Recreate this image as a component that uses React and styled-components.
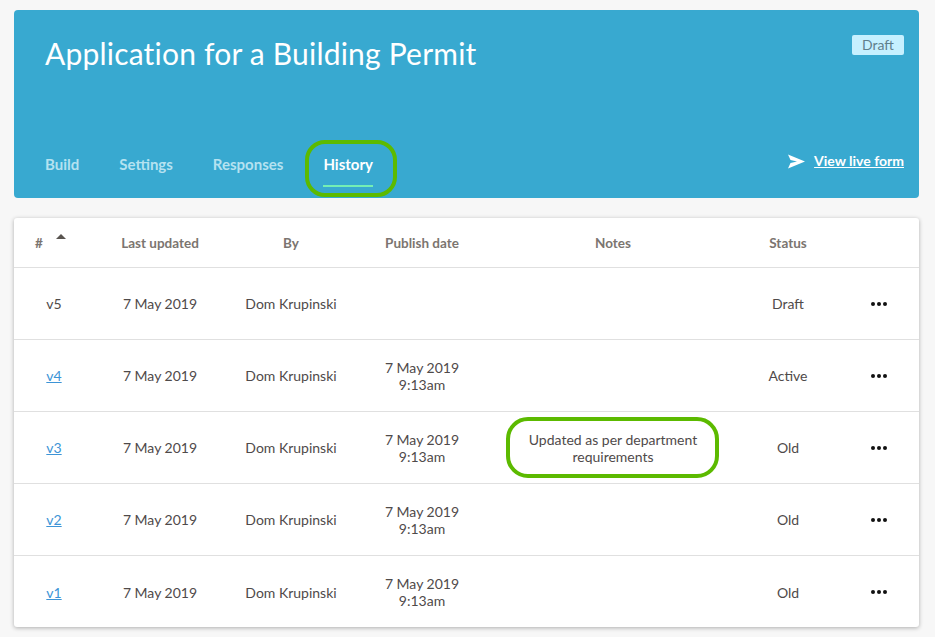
import styled, { createGlobalStyle } from "styled-components";

const rows = [
  { version: "v5", updated: "7 May 2019", by: "Dom Krupinski", status: "Draft" },
  { version: "v4", link: true, updated: "7 May 2019", by: "Dom Krupinski", published: true, status: "Active" },
  { version: "v3", link: true, updated: "7 May 2019", by: "Dom Krupinski", published: true, note: "Updated as per department requirements", status: "Old" },
  { version: "v2", link: true, updated: "7 May 2019", by: "Dom Krupinski", published: true, status: "Old" },
  { version: "v1", link: true, updated: "7 May 2019", by: "Dom Krupinski", published: true, status: "Old" },
];

export default function App() {
  return (
    <Page>
      <GlobalStyle />
      <Banner>
        <BannerTop>
          <Title>Application for a Building Permit</Title>
          <Badge>Draft</Badge>
        </BannerTop>
        <BannerBottom>
          <Tabs>
            <Tab>Build</Tab>
            <Tab>Settings</Tab>
            <Tab>Responses</Tab>
            <Tab $active>
              History
              <TabRing />
            </Tab>
          </Tabs>
          <LiveLink>
            <svg width="17" height="15" viewBox="0 0 17 15">
              <path d="M0 0.5 L17 7.5 L0 14.5 L2.5 9 L9 7.5 L2.5 6 Z" fill="#fff" />
            </svg>
            <a href="#live">View live form</a>
          </LiveLink>
        </BannerBottom>
      </Banner>

      <Card>
        <HeadRow>
          <HeadCell>
            <SortLabel>
              #
              <SortArrow />
            </SortLabel>
          </HeadCell>
          <HeadCell>Last updated</HeadCell>
          <HeadCell>By</HeadCell>
          <HeadCell>Publish date</HeadCell>
          <HeadCell>Notes</HeadCell>
          <HeadCell>Status</HeadCell>
          <HeadCell />
        </HeadRow>
        {rows.map((row) => (
          <Row key={row.version}>
            <Cell>{row.link ? <a href="#version">{row.version}</a> : row.version}</Cell>
            <Cell>{row.updated}</Cell>
            <Cell>{row.by}</Cell>
            <Cell>
              {row.published && (
                <>
                  7 May 2019
                  <br />
                  9:13am
                </>
              )}
            </Cell>
            <Cell>{row.note && <Note>{row.note}<NoteRing /></Note>}</Cell>
            <Cell>{row.status}</Cell>
            <Cell>
              <Dots>
                <i />
                <i />
                <i />
              </Dots>
            </Cell>
          </Row>
        ))}
      </Card>
    </Page>
  );
}

const GlobalStyle = createGlobalStyle`
  html, body {
    margin: 0;
    background: #f7f7f7;
  }
  body {
    font-family: Lato, "Open Sans", sans-serif;
    color: #4a4a4a;
  }
`;

const Page = styled.div`
  width: 935px;
  height: 637px;
  box-sizing: border-box;
  padding: 10px 16px 10px 14px;
  display: flex;
  flex-direction: column;
  gap: 20px;
  overflow: hidden;
`;

const Banner = styled.div`
  height: 188px;
  box-sizing: border-box;
  background: #38a9d0;
  border-radius: 4px;
  padding: 25px 15px 0 31px;
  display: flex;
  flex-direction: column;
  justify-content: space-between;
`;

const BannerTop = styled.div`
  display: flex;
  justify-content: space-between;
  align-items: flex-start;
`;

const Title = styled.h1`
  margin: 0;
  font-size: 30px;
  line-height: 36px;
  font-weight: 400;
  color: #fff;
  letter-spacing: 0.2px;
`;

const Badge = styled.span`
  margin-top: 0;
  width: 52px;
  height: 20px;
  background: #c6f0ff;
  border-radius: 2px;
  color: #5f7f8c;
  font-size: 14px;
  line-height: 20px;
  text-align: center;
`;

const BannerBottom = styled.div`
  display: flex;
  justify-content: space-between;
  align-items: flex-start;
`;

const Tabs = styled.div`
  display: flex;
  gap: 40px;
`;

const Tab = styled.div`
  position: relative;
  height: 47px;
  padding-top: 3px;
  box-sizing: border-box;
  font-size: 15px;
  line-height: 20px;
  font-weight: 700;
  color: ${(p) => (p.$active ? "#fff" : "#b5e2f0")};

  ${(p) =>
    p.$active &&
    `
    &::after {
      content: "";
      position: absolute;
      left: 0;
      right: 0;
      top: 34px;
      height: 2px;
      background: #74eeb4;
    }
  `}
`;

const TabRing = styled.span`
  position: absolute;
  left: -18px;
  right: -24px;
  top: -11px;
  height: 57px;
  box-sizing: border-box;
  border: 4px solid #5cba00;
  border-radius: 20px;
`;

const LiveLink = styled.div`
  display: flex;
  align-items: center;
  gap: 9px;
  font-size: 14px;
  line-height: 18px;
  font-weight: 700;
  margin-top: 1px;

  a {
    color: #fff;
  }
`;

const Card = styled.div`
  height: 409px;
  background: #fff;
  border-radius: 3px;
  box-shadow: 0 1px 4px rgba(0, 0, 0, 0.3);
`;

const columns = "80px 132px 130px 132px 250px 100px 81px";

const HeadRow = styled.div`
  display: grid;
  grid-template-columns: ${columns};
  height: 50px;
  box-sizing: border-box;
  border-bottom: 1px solid #e0e0e0;
`;

const HeadCell = styled.div`
  display: flex;
  align-items: center;
  justify-content: center;
  font-size: 13.5px;
  font-weight: 700;
  color: #7b7570;
`;

const SortLabel = styled.span`
  position: relative;
  margin-right: 30px;
`;

const SortArrow = styled.span`
  position: absolute;
  left: 21px;
  top: -1px;
  width: 0;
  height: 0;
  border-left: 5px solid transparent;
  border-right: 5px solid transparent;
  border-bottom: 5px solid #595550;
`;

const Row = styled.div`
  display: grid;
  grid-template-columns: ${columns};
  height: 72px;
  box-sizing: border-box;
  border-bottom: 1px solid #e0e0e0;

  &:last-child {
    border-bottom: none;
  }
`;

const Cell = styled.div`
  display: flex;
  align-items: center;
  justify-content: center;
  text-align: center;
  font-size: 14px;
  line-height: 17px;
  color: #4f4a4a;

  a {
    color: #3d94d6;
  }
`;

const Note = styled.div`
  position: relative;
  width: 190px;
`;

const NoteRing = styled.span`
  position: absolute;
  left: -12px;
  right: -11px;
  top: -14px;
  bottom: -13px;
  border: 4px solid #5cba00;
  border-radius: 22px;
`;

const Dots = styled.div`
  display: flex;
  gap: 2px;

  i {
    width: 4px;
    height: 4px;
    border-radius: 50%;
    background: #111;
  }
`;
